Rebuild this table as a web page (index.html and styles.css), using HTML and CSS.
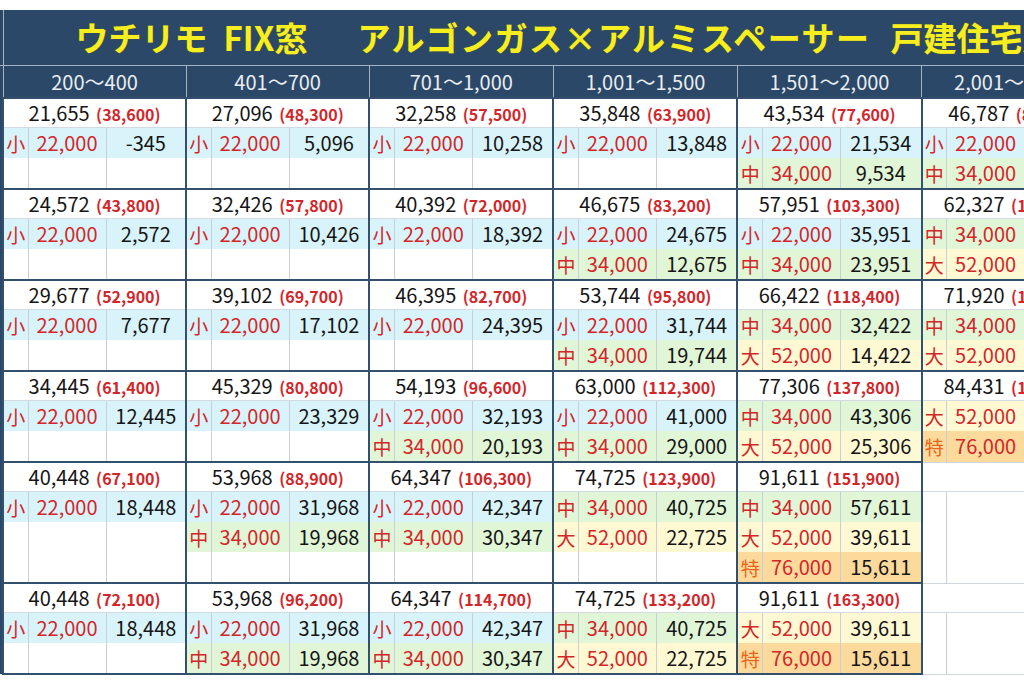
FILE: index.html
```html
<!DOCTYPE html>
<html lang="ja">
<head>
<meta charset="utf-8">
<title>ウチリモ FIX窓 価格表</title>
<link rel="stylesheet" href="styles.css">
</head>
<body>
<div class="wrap">
<table class="grid">
<colgroup>
<col class="c-edge">
<col class="c-lb"><col class="c-am"><col class="c-df">
<col class="c-lb"><col class="c-am"><col class="c-df">
<col class="c-lb"><col class="c-am"><col class="c-df2">
<col class="c-lb"><col class="c-am"><col class="c-df2">
<col class="c-lb"><col class="c-am"><col class="c-df2">
<col class="c-lb"><col class="c-am"><col class="c-df2">
</colgroup>
<thead>
<tr class="title">
<td class="edge-h"></td>
<td colspan="18" class="ttl"><span class="t1">ウチリモ</span><span class="t2">FIX窓</span><span class="t3">アルゴンガス×アルミスペーサー</span><span class="t4">戸建住宅用</span></td>
</tr>
<tr class="head">
<td class="edge-h"></td>
<th colspan="3">200～400</th>
<th colspan="3">401～700</th>
<th colspan="3">701～1,000</th>
<th colspan="3">1,001～1,500</th>
<th colspan="3">1,501～2,000</th>
<th colspan="3">2,001～2,500</th>
</tr>
</thead>
<tbody>
<!-- group 1 -->
<tr class="pr">
<td class="edge"></td>
<td colspan="3" class="p">21,655 <b>(38,600)</b></td>
<td colspan="3" class="p">27,096 <b>(48,300)</b></td>
<td colspan="3" class="p">32,258 <b>(57,500)</b></td>
<td colspan="3" class="p">35,848 <b>(63,900)</b></td>
<td colspan="3" class="p">43,534 <b>(77,600)</b></td>
<td colspan="3" class="p">46,787 <b>(83,500)</b></td>
</tr>
<tr class="sub">
<td class="edge"></td>
<td class="lb s">小</td><td class="am">22,000</td><td class="df">-345</td>
<td class="lb s">小</td><td class="am">22,000</td><td class="df">5,096</td>
<td class="lb s">小</td><td class="am">22,000</td><td class="df">10,258</td>
<td class="lb s">小</td><td class="am">22,000</td><td class="df">13,848</td>
<td class="lb s">小</td><td class="am">22,000</td><td class="df">21,534</td>
<td class="lb s">小</td><td class="am">22,000</td><td class="df">24,787</td>
</tr>
<tr class="sub">
<td class="edge"></td>
<td class="lb"></td><td class="am"></td><td class="df"></td>
<td class="lb"></td><td class="am"></td><td class="df"></td>
<td class="lb"></td><td class="am"></td><td class="df"></td>
<td class="lb"></td><td class="am"></td><td class="df"></td>
<td class="lb m">中</td><td class="am">34,000</td><td class="df">9,534</td>
<td class="lb m">中</td><td class="am">34,000</td><td class="df">12,787</td>
</tr>
<!-- group 2 -->
<tr class="pr">
<td class="edge"></td>
<td colspan="3" class="p">24,572 <b>(43,800)</b></td>
<td colspan="3" class="p">32,426 <b>(57,800)</b></td>
<td colspan="3" class="p">40,392 <b>(72,000)</b></td>
<td colspan="3" class="p">46,675 <b>(83,200)</b></td>
<td colspan="3" class="p">57,951 <b>(103,300)</b></td>
<td colspan="3" class="p">62,327 <b>(111,100)</b></td>
</tr>
<tr class="sub">
<td class="edge"></td>
<td class="lb s">小</td><td class="am">22,000</td><td class="df">2,572</td>
<td class="lb s">小</td><td class="am">22,000</td><td class="df">10,426</td>
<td class="lb s">小</td><td class="am">22,000</td><td class="df">18,392</td>
<td class="lb s">小</td><td class="am">22,000</td><td class="df">24,675</td>
<td class="lb s">小</td><td class="am">22,000</td><td class="df">35,951</td>
<td class="lb m">中</td><td class="am">34,000</td><td class="df">28,327</td>
</tr>
<tr class="sub">
<td class="edge"></td>
<td class="lb"></td><td class="am"></td><td class="df"></td>
<td class="lb"></td><td class="am"></td><td class="df"></td>
<td class="lb"></td><td class="am"></td><td class="df"></td>
<td class="lb m">中</td><td class="am">34,000</td><td class="df">12,675</td>
<td class="lb m">中</td><td class="am">34,000</td><td class="df">23,951</td>
<td class="lb l">大</td><td class="am">52,000</td><td class="df">10,327</td>
</tr>
<!-- group 3 -->
<tr class="pr">
<td class="edge"></td>
<td colspan="3" class="p">29,677 <b>(52,900)</b></td>
<td colspan="3" class="p">39,102 <b>(69,700)</b></td>
<td colspan="3" class="p">46,395 <b>(82,700)</b></td>
<td colspan="3" class="p">53,744 <b>(95,800)</b></td>
<td colspan="3" class="p">66,422 <b>(118,400)</b></td>
<td colspan="3" class="p">71,920 <b>(128,200)</b></td>
</tr>
<tr class="sub">
<td class="edge"></td>
<td class="lb s">小</td><td class="am">22,000</td><td class="df">7,677</td>
<td class="lb s">小</td><td class="am">22,000</td><td class="df">17,102</td>
<td class="lb s">小</td><td class="am">22,000</td><td class="df">24,395</td>
<td class="lb s">小</td><td class="am">22,000</td><td class="df">31,744</td>
<td class="lb m">中</td><td class="am">34,000</td><td class="df">32,422</td>
<td class="lb m">中</td><td class="am">34,000</td><td class="df">37,920</td>
</tr>
<tr class="sub">
<td class="edge"></td>
<td class="lb"></td><td class="am"></td><td class="df"></td>
<td class="lb"></td><td class="am"></td><td class="df"></td>
<td class="lb"></td><td class="am"></td><td class="df"></td>
<td class="lb m">中</td><td class="am">34,000</td><td class="df">19,744</td>
<td class="lb l">大</td><td class="am">52,000</td><td class="df">14,422</td>
<td class="lb l">大</td><td class="am">52,000</td><td class="df">19,920</td>
</tr>
<!-- group 4 -->
<tr class="pr">
<td class="edge"></td>
<td colspan="3" class="p">34,445 <b>(61,400)</b></td>
<td colspan="3" class="p">45,329 <b>(80,800)</b></td>
<td colspan="3" class="p">54,193 <b>(96,600)</b></td>
<td colspan="3" class="p">63,000 <b>(112,300)</b></td>
<td colspan="3" class="p">77,306 <b>(137,800)</b></td>
<td colspan="3" class="p">84,431 <b>(150,500)</b></td>
</tr>
<tr class="sub">
<td class="edge"></td>
<td class="lb s">小</td><td class="am">22,000</td><td class="df">12,445</td>
<td class="lb s">小</td><td class="am">22,000</td><td class="df">23,329</td>
<td class="lb s">小</td><td class="am">22,000</td><td class="df">32,193</td>
<td class="lb s">小</td><td class="am">22,000</td><td class="df">41,000</td>
<td class="lb m">中</td><td class="am">34,000</td><td class="df">43,306</td>
<td class="lb l">大</td><td class="am">52,000</td><td class="df">32,431</td>
</tr>
<tr class="sub">
<td class="edge"></td>
<td class="lb"></td><td class="am"></td><td class="df"></td>
<td class="lb"></td><td class="am"></td><td class="df"></td>
<td class="lb m">中</td><td class="am">34,000</td><td class="df">20,193</td>
<td class="lb m">中</td><td class="am">34,000</td><td class="df">29,000</td>
<td class="lb l">大</td><td class="am">52,000</td><td class="df">25,306</td>
<td class="lb x">特</td><td class="am">76,000</td><td class="df">8,431</td>
</tr>
<!-- group 5 -->
<tr class="pr">
<td class="edge"></td>
<td colspan="3" class="p">40,448 <b>(67,100)</b></td>
<td colspan="3" class="p">53,968 <b>(88,900)</b></td>
<td colspan="3" class="p">64,347 <b>(106,300)</b></td>
<td colspan="3" class="p">74,725 <b>(123,900)</b></td>
<td colspan="3" class="p">91,611 <b>(151,900)</b></td>
<td colspan="3" class="p bk"></td>
</tr>
<tr class="sub">
<td class="edge"></td>
<td class="lb s">小</td><td class="am">22,000</td><td class="df">18,448</td>
<td class="lb s">小</td><td class="am">22,000</td><td class="df">31,968</td>
<td class="lb s">小</td><td class="am">22,000</td><td class="df">42,347</td>
<td class="lb m">中</td><td class="am">34,000</td><td class="df">40,725</td>
<td class="lb m">中</td><td class="am">34,000</td><td class="df">57,611</td>
<td class="lb"></td><td class="am"></td><td class="df"></td>
</tr>
<tr class="sub">
<td class="edge"></td>
<td class="lb"></td><td class="am"></td><td class="df"></td>
<td class="lb m">中</td><td class="am">34,000</td><td class="df">19,968</td>
<td class="lb m">中</td><td class="am">34,000</td><td class="df">30,347</td>
<td class="lb l">大</td><td class="am">52,000</td><td class="df">22,725</td>
<td class="lb l">大</td><td class="am">52,000</td><td class="df">39,611</td>
<td class="lb"></td><td class="am"></td><td class="df"></td>
</tr>
<tr class="sub">
<td class="edge"></td>
<td class="lb"></td><td class="am"></td><td class="df"></td>
<td class="lb"></td><td class="am"></td><td class="df"></td>
<td class="lb"></td><td class="am"></td><td class="df"></td>
<td class="lb"></td><td class="am"></td><td class="df"></td>
<td class="lb x">特</td><td class="am">76,000</td><td class="df">15,611</td>
<td class="lb"></td><td class="am"></td><td class="df"></td>
</tr>
<!-- group 6 -->
<tr class="pr">
<td class="edge"></td>
<td colspan="3" class="p">40,448 <b>(72,100)</b></td>
<td colspan="3" class="p">53,968 <b>(96,200)</b></td>
<td colspan="3" class="p">64,347 <b>(114,700)</b></td>
<td colspan="3" class="p">74,725 <b>(133,200)</b></td>
<td colspan="3" class="p">91,611 <b>(163,300)</b></td>
<td colspan="3" class="p bk"></td>
</tr>
<tr class="sub">
<td class="edge"></td>
<td class="lb s">小</td><td class="am">22,000</td><td class="df">18,448</td>
<td class="lb s">小</td><td class="am">22,000</td><td class="df">31,968</td>
<td class="lb s">小</td><td class="am">22,000</td><td class="df">42,347</td>
<td class="lb m">中</td><td class="am">34,000</td><td class="df">40,725</td>
<td class="lb l">大</td><td class="am">52,000</td><td class="df">39,611</td>
<td class="lb"></td><td class="am"></td><td class="df"></td>
</tr>
<tr class="sub last">
<td class="edge"></td>
<td class="lb"></td><td class="am"></td><td class="df"></td>
<td class="lb m">中</td><td class="am">34,000</td><td class="df">19,968</td>
<td class="lb m">中</td><td class="am">34,000</td><td class="df">30,347</td>
<td class="lb l">大</td><td class="am">52,000</td><td class="df">22,725</td>
<td class="lb x">特</td><td class="am">76,000</td><td class="df">15,611</td>
<td class="lb bk"></td><td class="am bk"></td><td class="df bk"></td>
</tr>
</tbody>
</table>
</div>
</body>
</html>
```

FILE: styles.css
```css
html, body {
  margin: 0;
  padding: 0;
  background: #ffffff;
}

.wrap {
  width: 1024px;
  height: 683px;
  overflow: hidden;
  padding-top: 10px;
  box-sizing: border-box;
  font-family: "Noto Sans CJK JP", "Noto Sans", sans-serif;
}

.grid {
  border-collapse: collapse;
  table-layout: fixed;
  width: 1106px;
}

.c-edge { width: 3px; }
.c-lb { width: 25px; }
.c-am { width: 78px; }
.c-df { width: 80px; }
.c-df2 { width: 81px; }

/* header */
.edge-h {
  background: #2c4868;
  border-right: 1px solid #a6b3c1;
  padding: 0;
}

.title td {
  height: 55px;
  border-bottom: 1px solid #a6b3c1;
}

.ttl {
  background: #2c4868;
  color: #f6ee1f;
  font-size: 33px;
  font-weight: 700;
  white-space: nowrap;
  overflow: hidden;
  padding: 0 0 0 72px;
  text-shadow: 0 0 1px #6b6a20;
  line-height: 1;
}

.t2 { margin-left: 16px; }
.t3 { margin-left: 50px; letter-spacing: 1.5px; }
.t4 { margin-left: 20px; }

.head th,
.head td {
  height: 31px;
}

.head th {
  background: #2c4868;
  color: #e9eef3;
  font-weight: 400;
  font-size: 20px;
  padding: 0;
  border-left: 1px solid #a6b3c1;
  white-space: nowrap;
  overflow: hidden;
}

/* body */
.grid tbody td {
  padding: 0;
  text-align: center;
  vertical-align: middle;
  white-space: nowrap;
  overflow: hidden;
  color: #151515;
  font-size: 20px;
  line-height: 1;
}

.grid tbody td.edge {
  background: #2c4868;
}

.pr td {
  height: 28px;
}

.sub td {
  height: 30px;
}

.p {
  background: #ffffff;
  border-top: 2px solid #33506f;
  border-left: 2px solid #33506f;
  border-bottom: 1px solid #d3dae1;
}

.p b {
  color: #d2262a;
  font-size: 16px;
  font-weight: 700;
  margin-left: 2px;
}

.lb {
  border-left: 2px solid #33506f;
  color: #d2262a;
}

.grid tbody td.lb {
  color: #d2262a;
  font-size: 19px;
}

.grid tbody td.am {
  border-left: 1px solid #c8cfd6;
  color: #d2262a;
}

.df {
  border-left: 1px solid #c8cfd6;
}

.last td.lb,
.last td.am,
.last td.df {
  border-bottom: 2px solid #33506f;
}

.grid tbody td.p.bk {
  border-top: 1px solid #cfd6dd;
}

.last td.bk {
  border-bottom: 1px solid #cfd6dd;
}

/* size rows */
.s, .s + .am, .s + .am + .df { background: #d8f4fa; }
.m, .m + .am, .m + .am + .df { background: #e0f6d7; }
.l, .l + .am, .l + .am + .df { background: #fff9d3; }
.x, .x + .am, .x + .am + .df { background: #fcda9c; }

.grid tbody td.x { color: #e6661c; }
```
